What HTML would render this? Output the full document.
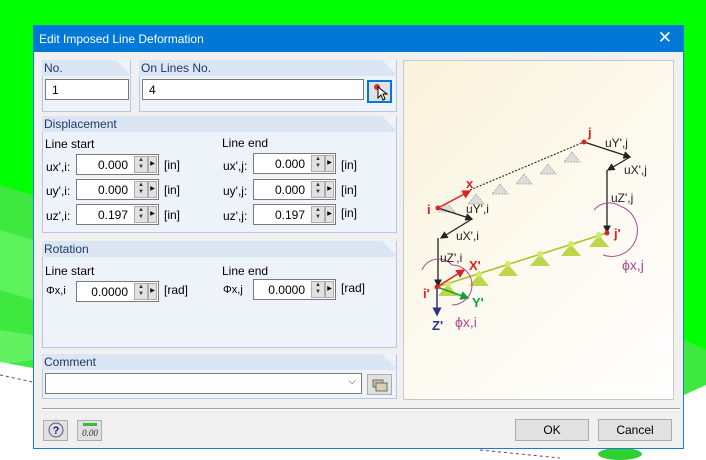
<!DOCTYPE html>
<html><head><meta charset="utf-8"><style>
*{box-sizing:border-box;margin:0;padding:0}
body{width:706px;height:460px;overflow:hidden;position:relative;font-family:"Liberation Sans",sans-serif;font-size:12px;color:#000;background:#00ff00}
.a{position:absolute}
.dlg{left:33px;top:25px;width:651px;height:424px;background:#f0f0f0;border:1px solid #1a7ad8}
.title{left:0;top:0;width:649px;height:26px;background:#0078d7;color:#fff;font-size:12px;padding:6px 0 0 5px}
.grp{position:absolute;background:#eef2f9;border:1px solid #b8c6ea;border-top:none}
.hdr{position:absolute;left:-1px;top:0;height:16px;background:#dbe5f3;color:#1f3a64;padding:1px 0 0 2px;clip-path:polygon(0 0,calc(100% - 16px) 0,100% 100%,0 100%)}
.inp{position:absolute;background:#fff;border:1px solid #7a7a7a;height:21px;padding:3px 0 0 6px}
.num{position:absolute;background:#fff;border:1px solid #7a7a7a;height:21px;width:83px}
.num span{position:absolute;right:30px;top:3px}
.spin{position:absolute;right:10px;top:1px;width:14px;height:17px;background:#e1e1e1;border:1px solid #adadad;font-size:6px;line-height:7px;text-align:center;color:#333}
.arr{position:absolute;right:1px;top:1px;width:9px;height:17px;background:#e1e1e1;border:1px solid #adadad;font-size:6px;line-height:15px;text-align:center}
.lbl{position:absolute}
.btn{position:absolute;background:#e1e1e1;border:1px solid #adadad;text-align:center;padding-top:3px}
</style></head><body>
<svg class="a" style="left:0;top:0" width="706" height="460">
<rect width="706" height="460" fill="#00ff00"/>
<polygon points="0,185 33,195 33,460 0,460" fill="#3ee83e"/>
<polygon points="0,230 33,240 33,300 0,290" fill="#5cf25c"/>
<polygon points="0,330 33,335 33,360 0,365" fill="#60f060"/>
<polygon points="0,362 33,368 33,460 0,460" fill="#ffffff"/>
<polygon points="684,340 706,350 706,395 684,400" fill="#3ee83e"/>
<polygon points="684,395 706,385 706,460 684,460" fill="#ffffff"/>
<rect x="0" y="449" width="706" height="11" fill="#ffffff"/>
<ellipse cx="620" cy="454" rx="22" ry="6" fill="#30d030"/>
<line x1="0" y1="375" x2="33" y2="382" stroke="#7a3a8a" stroke-dasharray="3,3"/>
<line x1="480" y1="450" x2="560" y2="458" stroke="#7a3a8a" stroke-dasharray="3,3"/>
</svg>
<div class="a dlg">
 <div class="a title">Edit Imposed Line Deformation<span style="position:absolute;right:11px;top:2px;font-size:17px;font-weight:lighter">✕</span></div>
 <div class="grp" style="left:8px;top:34px;width:89px;height:52px"><div class="hdr" style="width:90px">No.</div>
  <div class="inp" style="left:2px;top:19px;width:84px">1</div></div>
 <div class="grp" style="left:105px;top:34px;width:258px;height:52px"><div class="hdr" style="width:259px">On Lines No.</div>
  <div class="inp" style="left:2px;top:19px;width:222px">4</div>
  <div class="a" style="left:227px;top:20px;width:25px;height:23px;border:2px solid #0078d7;background:#e1e1e1">
   <svg width="21" height="19"><circle cx="8" cy="5" r="3" fill="#e03030"/><path d="M9 5 L9 16 L12 13 L14 18 L16 17 L14 12 L18 12 Z" fill="#fff" stroke="#000" stroke-width="1"/></svg></div></div>
 <div class="grp" style="left:8px;top:90px;width:355px;height:117px"><div class="hdr" style="width:356px">Displacement</div>
  <div class="lbl" style="left:2px;top:21px">Line start</div><div class="lbl" style="left:179px;top:20px">Line end</div>
  <div class="lbl" style="left:3px;top:44px">ux',i:</div>
  <div class="num" style="left:33px;top:38px"><span>0.000</span><div class="spin">▲<br>▼</div><div class="arr">▶</div></div><div class="lbl" style="left:121px;top:42px">[in]</div>
  <div class="lbl" style="left:3px;top:68px">uy',i:</div>
  <div class="num" style="left:33px;top:63px"><span>0.000</span><div class="spin">▲<br>▼</div><div class="arr">▶</div></div><div class="lbl" style="left:121px;top:67px">[in]</div>
  <div class="lbl" style="left:3px;top:93px">uz',i:</div>
  <div class="num" style="left:33px;top:88px"><span>0.197</span><div class="spin">▲<br>▼</div><div class="arr">▶</div></div><div class="lbl" style="left:121px;top:92px">[in]</div>
  <div class="lbl" style="left:180px;top:43px">ux',j:</div>
  <div class="num" style="left:210px;top:37px"><span>0.000</span><div class="spin">▲<br>▼</div><div class="arr">▶</div></div><div class="lbl" style="left:298px;top:42px">[in]</div>
  <div class="lbl" style="left:180px;top:68px">uy',j:</div>
  <div class="num" style="left:210px;top:63px"><span>0.000</span><div class="spin">▲<br>▼</div><div class="arr">▶</div></div><div class="lbl" style="left:298px;top:67px">[in]</div>
  <div class="lbl" style="left:180px;top:93px">uz',j:</div>
  <div class="num" style="left:210px;top:88px"><span>0.197</span><div class="spin">▲<br>▼</div><div class="arr">▶</div></div><div class="lbl" style="left:298px;top:90px">[in]</div>
 </div>
 <div class="grp" style="left:8px;top:215px;width:355px;height:107px"><div class="hdr" style="width:356px">Rotation</div>
  <div class="lbl" style="left:2px;top:23px">Line start</div><div class="lbl" style="left:179px;top:23px">Line end</div>
  <div class="lbl" style="left:3px;top:44px;font-size:11px">Φx,i</div>
  <div class="num" style="left:33px;top:40px"><span>0.0000</span><div class="spin">▲<br>▼</div><div class="arr">▶</div></div><div class="lbl" style="left:121px;top:42px">[rad]</div>
  <div class="lbl" style="left:180px;top:43px;font-size:11px">Φx,j</div>
  <div class="num" style="left:210px;top:38px"><span>0.0000</span><div class="spin">▲<br>▼</div><div class="arr">▶</div></div><div class="lbl" style="left:298px;top:40px">[rad]</div>
 </div>
 <div class="grp" style="left:8px;top:328px;width:355px;height:45px"><div class="hdr" style="width:356px">Comment</div>
  <div class="inp" style="left:2px;top:19px;width:317px;height:21px"><span style="position:absolute;right:5px;top:2px;font-size:10px;color:#444">⌵</span></div>
  <div class="btn" style="left:324px;top:20px;width:25px;height:21px"><svg width="18" height="14"><rect x="2" y="2" width="10" height="7" fill="#c8c0a0" stroke="#555" stroke-width=".8"/><rect x="5" y="5" width="11" height="8" fill="#d8d0b0" stroke="#555" stroke-width=".8"/></svg></div>
 </div>
 <div class="a" style="left:8px;top:382px;width:638px;height:2px;border-top:1px solid #a0a0a0;border-bottom:1px solid #fff"></div>
 <div class="btn" style="left:9px;top:394px;width:25px;height:21px;padding-top:1px"><svg width="18" height="17"><circle cx="9" cy="8" r="7" fill="#dde" stroke="#556" /><text x="9" y="12" font-size="11" font-weight="bold" text-anchor="middle" fill="#224" font-family="Liberation Sans">?</text></svg></div>
 <div class="btn" style="left:43px;top:394px;width:25px;height:21px;padding-top:1px"><svg width="20" height="17"><rect x="3" y="1" width="14" height="3" fill="#3cb83c"/><text x="10" y="14" font-size="9" font-style="italic" text-anchor="middle" fill="#223" font-family="Liberation Serif">0.00</text></svg></div>
 <div class="btn" style="left:481px;top:393px;width:74px;height:22px">OK</div>
 <div class="btn" style="left:564px;top:393px;width:74px;height:22px">Cancel</div>
 <div class="a" style="left:369px;top:34px;width:271px;height:340px;border:1px solid #c8c8c8;background:linear-gradient(135deg,#faf3dc 0%,#fcf9ee 50%,#fefefe 100%)"></div>
</div>
<svg class="a" style="left:0;top:0" width="706" height="460" font-family="Liberation Sans" font-size="12">
<defs>
<marker id="mk" markerWidth="6" markerHeight="6" refX="5" refY="3" orient="auto"><path d="M0,0 L6,3 L0,6Z" fill="#222"/></marker>
<marker id="mr" markerWidth="6" markerHeight="6" refX="5" refY="3" orient="auto"><path d="M0,0 L6,3 L0,6Z" fill="#e02020"/></marker>
<marker id="mg" markerWidth="6" markerHeight="6" refX="5" refY="3" orient="auto"><path d="M0,0 L6,3 L0,6Z" fill="#10a040"/></marker>
<marker id="mb" markerWidth="6" markerHeight="6" refX="5" refY="3" orient="auto"><path d="M0,0 L6,3 L0,6Z" fill="#303090"/></marker>
</defs>
<g fill="#ddd" stroke="#888" stroke-dasharray="1.5,1.5" stroke-width=".7">
<path d="M447,203 l8,9 h-16z"/><path d="M476,194 l8,10 h-16z"/><path d="M500,184 l8,10 h-16z"/><path d="M524,174 l8,10 h-16z"/><path d="M548,164 l8,10 h-16z"/><path d="M572,152 l8,10 h-16z"/></g>
<line x1="470" y1="190" x2="584" y2="142" stroke="#333" stroke-dasharray="2,1.5" stroke-width="1.2"/>
<line x1="437" y1="287" x2="607" y2="233" stroke="#a8c820" stroke-width="1.6"/>
<g fill="#bcd84a"><path d="M448,284 l10,12 h-20z"/><path d="M479,274 l10,12 h-20z"/><path d="M508,264 l10,12 h-20z"/><path d="M540,254 l10,12 h-20z"/><path d="M571,244 l10,12 h-20z"/><path d="M599,235 l10,12 h-20z"/></g>
<g fill="#d4e870"><circle cx="448" cy="284" r="3"/><circle cx="479" cy="274" r="3"/><circle cx="508" cy="264" r="3"/><circle cx="540" cy="254" r="3"/><circle cx="571" cy="244" r="3"/><circle cx="599" cy="235" r="3"/></g>
<g stroke="#222" stroke-width="1.3" fill="none">
<path d="M584,142 L630,157" marker-end="url(#mk)"/><path d="M630,157 L608,170" marker-end="url(#mk)"/><path d="M607,170 L607,232" marker-end="url(#mk)"/>
<path d="M438,208 L472,219" marker-end="url(#mk)"/><path d="M472,219 L441,238" marker-end="url(#mk)"/><path d="M438,238 L438,286" marker-end="url(#mk)"/>
</g>
<path d="M438,208 L470,191" stroke="#e02020" stroke-width="1.5" marker-end="url(#mr)"/>
<path d="M437,287 L464,270" stroke="#e02020" stroke-width="1.5" marker-end="url(#mr)"/>
<path d="M437,287 L468,298" stroke="#10a040" stroke-width="1.5" marker-end="url(#mg)"/>
<path d="M437,287 L437,315" stroke="#303090" stroke-width="1.5" marker-end="url(#mb)"/>
<g stroke="#b04890" fill="none" stroke-width="1"><path d="M422,270 A18,18 0 0 1 452,265 A20,20 0 0 1 452,305"/><path d="M594,210 A20,20 0 0 1 620,206 A22,22 0 0 1 603,255"/></g>
<g fill="#e02020"><circle cx="438" cy="208" r="2.5"/><circle cx="584" cy="142" r="2.5"/><circle cx="607" cy="233" r="2.5"/><circle cx="437" cy="287" r="2.5"/></g>
<g fill="#e02020" font-weight="bold" font-size="13"><text x="427" y="214">i</text><text x="588" y="137">j</text><text x="466" y="188">x</text><text x="614" y="238">j'</text><text x="423" y="298">i'</text><text x="469" y="270">X'</text></g>
<text x="472" y="307" fill="#10a040" font-weight="bold" font-size="13">Y'</text>
<text x="432" y="330" fill="#303090" font-weight="bold" font-size="13">Z'</text>
<g fill="#222" font-size="12"><text x="605" y="147">uY',j</text><text x="624" y="174">uX',j</text><text x="611" y="202">uZ',j</text><text x="466" y="213">uY',i</text><text x="456" y="240">uX',i</text><text x="440" y="262">uZ',i</text></g>
<g fill="#b04890" font-size="14"><text x="622" y="270">ϕx,j</text><text x="455" y="327">ϕx,i</text></g>
</svg>
</body></html>
